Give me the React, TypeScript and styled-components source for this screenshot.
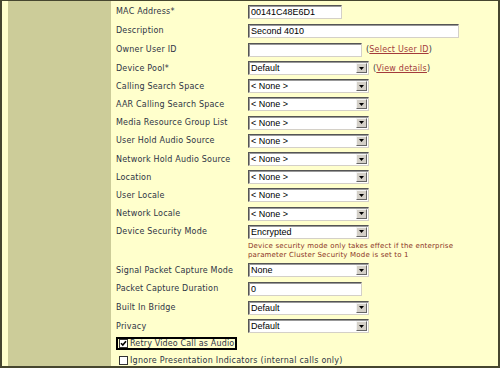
import React from 'react';
import styled, { createGlobalStyle } from 'styled-components';

const GlobalStyle = createGlobalStyle`
  html, body {
    margin: 0;
    padding: 0;
    background: #ffffcc;
  }
  * { box-sizing: border-box; }
`;

const Frame = styled.div`
  width: 500px;
  height: 368px;
  border: 2px solid #46462f;
  border-top-width: 1px;
  background: #ffffcc;
  display: flex;
  padding-left: 6px;
  overflow: hidden;
`;

const SideColumn = styled.div`
  width: 103px;
  flex-shrink: 0;
  background: #cccc99;
`;

const Panel = styled.div`
  flex: 1;
  padding: 1px 0 0 5px;
  display: flex;
  flex-direction: column;
  font-family: 'DejaVu Sans', Verdana, sans-serif;
  font-size: 8px;
  letter-spacing: 0.2px;
  color: #2e3444;
`;

const Row = styled.div<{ $h: number }>`
  height: ${(p) => p.$h}px;
  display: flex;
  align-items: center;
  flex-shrink: 0;
`;

const Label = styled.div`
  width: 132px;
  flex-shrink: 0;
  white-space: nowrap;
`;

const Field = styled.div`
  display: flex;
  align-items: center;
  gap: 4px;
`;

const TextBox = styled.div<{ $w: number }>`
  width: ${(p) => p.$w}px;
  height: 14px;
  background: #ffffff;
  border: 1px solid #d4d0c8;
  border-top-color: #555;
  border-left-color: #555;
  box-shadow: inset 1px 1px 0 #999;
  font-family: 'Liberation Sans', Arial, sans-serif;
  font-size: 9px;
  letter-spacing: 0;
  color: #000;
  padding-left: 2px;
  line-height: 12px;
  white-space: nowrap;
`;

const SelectBox = styled.div`
  width: 121px;
  height: 14px;
  background: #ffffff;
  border: 1px solid #d4d0c8;
  border-top-color: #555;
  border-left-color: #555;
  box-shadow: inset 1px 1px 0 #999;
  display: flex;
  align-items: stretch;
  font-family: 'Liberation Sans', Arial, sans-serif;
  font-size: 9px;
  letter-spacing: 0;
  color: #000;
`;

const SelectValue = styled.div`
  flex: 1;
  padding-left: 2px;
  line-height: 12px;
  white-space: nowrap;
`;

const ArrowButton = styled.div`
  width: 11px;
  margin: 1px 1px 1px 0;
  background: #d4d0c8;
  border: 1px solid #f4f4f4;
  border-right-color: #666;
  border-bottom-color: #666;
  display: flex;
  align-items: center;
  justify-content: center;
`;

const Paren = styled.span`
  white-space: nowrap;
  color: #2e3444;
`;

const LinkText = styled.span`
  color: #a33b3b;
  text-decoration: underline;
`;

const Note = styled.div`
  padding-left: 132px;
  color: #8b3424;
  font-size: 7px;
  letter-spacing: 0.18px;
  line-height: 9.5px;
  padding-top: 1px;
  height: 20px;
  flex-shrink: 0;
  white-space: nowrap;
`;

const CheckRow = styled.div<{ $boxed?: boolean }>`
  display: inline-flex;
  align-items: center;
  gap: 2px;
  align-self: flex-start;
  height: ${(p) => (p.$boxed ? 17 : 11)}px;
  padding: 0 1px 0 1px;
  border: ${(p) => (p.$boxed ? '2px solid #000' : '2px solid transparent')};
  margin-top: ${(p) => (p.$boxed ? 1 : 5)}px;
  letter-spacing: ${(p) => (p.$boxed ? 0.15 : 0.25)}px;
  white-space: nowrap;
`;

const Box = styled.span`
  width: 9px;
  height: 9px;
  background: #fff;
  border: 1px solid #333;
  display: inline-flex;
  align-items: center;
  justify-content: center;
`;

const Arrow = () => (
  <svg width="5" height="3" viewBox="0 0 5 3">
    <path d="M0 0h5L2.5 3z" fill="#000" />
  </svg>
);

const Check = () => (
  <svg width="7" height="7" viewBox="0 0 7 7">
    <path d="M1 3.2l1.8 1.8L6 1.2" stroke="#000" strokeWidth="1.6" fill="none" />
  </svg>
);

const Select = ({ value }: { value: string }) => (
  <SelectBox>
    <SelectValue>{value}</SelectValue>
    <ArrowButton>
      <Arrow />
    </ArrowButton>
  </SelectBox>
);

const NONE = '< None >';

const topRows = [
  { label: 'Calling Search Space', value: NONE },
  { label: 'AAR Calling Search Space', value: NONE },
  { label: 'Media Resource Group List', value: NONE },
  { label: 'User Hold Audio Source', value: NONE },
  { label: 'Network Hold Audio Source', value: NONE },
  { label: 'Location', value: NONE },
  { label: 'User Locale', value: NONE },
  { label: 'Network Locale', value: NONE },
  { label: 'Device Security Mode', value: 'Encrypted' },
];

export default function App() {
  return (
    <>
      <GlobalStyle />
      <Frame>
        <SideColumn />
        <Panel>
          <Row $h={19}>
            <Label>MAC Address*</Label>
            <TextBox $w={94}>00141C48E6D1</TextBox>
          </Row>
          <Row $h={19}>
            <Label>Description</Label>
            <TextBox $w={211}>Second 4010</TextBox>
          </Row>
          <Row $h={19}>
            <Label>Owner User ID</Label>
            <Field>
              <TextBox $w={114} />
              <Paren>
                (<LinkText>Select User ID</LinkText>)
              </Paren>
            </Field>
          </Row>
          <Row $h={18.2}>
            <Label>Device Pool*</Label>
            <Field>
              <Select value="Default" />
              <Paren>
                (<LinkText>View details</LinkText>)
              </Paren>
            </Field>
          </Row>
          {topRows.map((r) => (
            <Row $h={18.2} key={r.label}>
              <Label>{r.label}</Label>
              <Select value={r.value} />
            </Row>
          ))}
          <Note>
            Device security mode only takes effect if the enterprise
            <br />
            parameter Cluster Security Mode is set to 1
          </Note>
          <Row $h={18.67}>
            <Label>Signal Packet Capture Mode</Label>
            <Select value="None" />
          </Row>
          <Row $h={18.67}>
            <Label>Packet Capture Duration</Label>
            <TextBox $w={114}>0</TextBox>
          </Row>
          <Row $h={18.67}>
            <Label>Built In Bridge</Label>
            <Select value="Default" />
          </Row>
          <Row $h={18.67}>
            <Label>Privacy</Label>
            <Select value="Default" />
          </Row>
          <CheckRow $boxed>
            <Box>
              <Check />
            </Box>
            Retry Video Call as Audio
          </CheckRow>
          <CheckRow>
            <Box />
            Ignore Presentation Indicators (internal calls only)
          </CheckRow>
        </Panel>
      </Frame>
    </>
  );
}
